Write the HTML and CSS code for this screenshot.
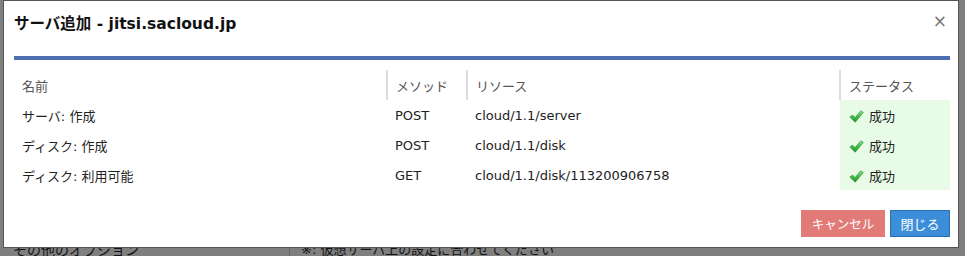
FILE: index.html
```html
<!DOCTYPE html>
<html lang="ja">
<head>
    <meta charset="UTF-8">
    <title>サーバ追加</title>
    <link rel="stylesheet" href="styles.css">
</head>
<body>
    <div class="page">
        <div class="page-row">
            <span class="page-heading">その他のオプション</span>
            <span class="page-note">※: 仮想サーバ上の設定に合わせてください</span>
        </div>
    </div>

    <div class="modal">
        <div class="modal-header">
            <h4 class="modal-title">サーバ追加 - jitsi.sacloud.jp</h4>
            <span class="close">&times;</span>
        </div>
        <div class="modal-body">
            <table class="jobs">
                <thead>
                    <tr>
                        <th class="col-name">名前</th>
                        <th class="col-method">メソッド</th>
                        <th class="col-resource">リソース</th>
                        <th class="col-status">ステータス</th>
                    </tr>
                </thead>
                <tbody>
                    <tr>
                        <td>サーバ: 作成</td>
                        <td>POST</td>
                        <td>cloud/1.1/server</td>
                        <td class="status"><svg class="check" viewBox="0 0 16 14"><use href="#check"/></svg>成功</td>
                    </tr>
                    <tr>
                        <td>ディスク: 作成</td>
                        <td>POST</td>
                        <td>cloud/1.1/disk</td>
                        <td class="status"><svg class="check" viewBox="0 0 16 14"><use href="#check"/></svg>成功</td>
                    </tr>
                    <tr>
                        <td>ディスク: 利用可能</td>
                        <td>GET</td>
                        <td>cloud/1.1/disk/113200906758</td>
                        <td class="status"><svg class="check" viewBox="0 0 16 14"><use href="#check"/></svg>成功</td>
                    </tr>
                </tbody>
            </table>
        </div>
        <div class="modal-footer">
            <button class="btn btn-cancel">キャンセル</button>
            <button class="btn btn-close">閉じる</button>
        </div>
    </div>

    <svg width="0" height="0" class="defs">
        <defs>
            <linearGradient id="checkGrad" x1="0" y1="0" x2="0" y2="1">
                <stop offset="0" stop-color="#8be08a"/>
                <stop offset="0.5" stop-color="#3fbf45"/>
                <stop offset="1" stop-color="#1f8f2a"/>
            </linearGradient>
            <g id="check">
                <path d="M0.8 7.6 L3.8 5.4 L6.4 8.2 L12.6 0.8 L15.4 2.6 L6.6 13.2 Z" fill="url(#checkGrad)" stroke="#2a8a30" stroke-width="0.6" stroke-linejoin="round"/>
            </g>
        </defs>
    </svg>
</body>
</html>
```

FILE: styles.css
```css
html, body {
    margin: 0;
    padding: 0;
    height: 100%;
}
body {
    background: #7f7f7f;
    font-family: "DejaVu Sans", "Noto Sans CJK JP", sans-serif;
    font-size: 13px;
    color: #222;
    position: relative;
    overflow: hidden;
}
.defs {
    position: absolute;
}

/* dimmed page behind the dialog */
.page {
    padding-top: 240px;
}
.page-row {
    display: flex;
    align-items: flex-start;
}
.page-heading {
    width: 276px;
    padding-left: 13px;
    font-size: 14px;
    line-height: 20px;
    color: #111;
}
.page-note {
    border-left: 1px solid #666;
    padding-left: 11px;
    line-height: 20px;
    color: #111;
}

/* dialog */
.modal {
    position: absolute;
    top: 0;
    left: 3px;
    width: 954px;
    height: 246px;
    background: #fff;
    border: 1px solid #555;
}
.modal-header {
    display: flex;
    align-items: center;
    justify-content: space-between;
    height: 46px;
    padding: 0 10px;
}
.modal-title {
    margin: 0;
    font-size: 15.5px;
    font-weight: bold;
    color: #111;
    line-height: 22px;
}
.close {
    align-self: flex-start;
    font-size: 17px;
    color: #777;
    line-height: 20px;
    margin: 10px 1px 0 0;
}
.modal-body {
    margin: 9px 8px 0 10px;
    border-top: 4px solid #4e6fb4;
    padding-top: 10px;
}
.jobs {
    width: 100%;
    border-collapse: collapse;
    table-layout: fixed;
}
.jobs th {
    text-align: left;
    font-weight: normal;
    color: #555;
    height: 30px;
    padding: 0 8px;
    vertical-align: middle;
}
.jobs th + th {
    border-left: 2px solid #ddd;
}
.col-name { width: 356px; }
.col-method { width: 62px; }
.col-resource { width: 355px; }
.col-status { width: auto; }
.jobs td {
    height: 30px;
    padding: 0 8px;
    vertical-align: middle;
    color: #222;
}
.jobs td.status {
    background: #e8fbe6;
    padding-left: 9px;
}
.check {
    width: 15px;
    height: 13px;
    vertical-align: -2px;
    margin-right: 5px;
}
.modal-footer {
    display: flex;
    justify-content: flex-end;
    gap: 5px;
    margin: 20px 8px 0 0;
}
.btn {
    font-family: "DejaVu Sans", "Noto Sans CJK JP", sans-serif;
    font-size: 13px;
    height: 27px;
    color: #fff;
    border: 1px solid transparent;
    padding: 0;
    white-space: nowrap;
    cursor: pointer;
}
.btn-cancel {
    background: #e27b78;
    border-color: #e27b78;
    width: 84px;
    font-size: 12.5px;
}
.btn-close {
    background: #3c8ed8;
    border-color: #2a6fb6;
    width: 60px;
}
```
